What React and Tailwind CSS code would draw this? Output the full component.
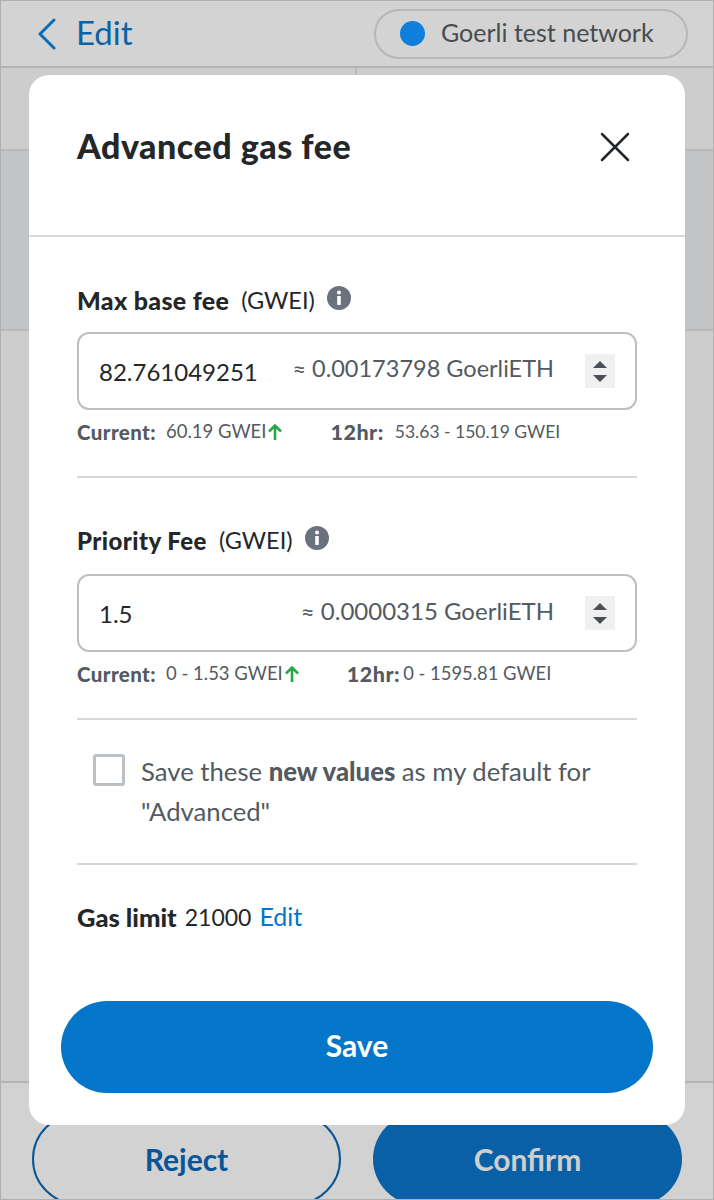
import { X } from 'lucide-react'

const font = { fontFamily: 'Lato, sans-serif' }

function Info() {
  return (
    <svg width="24" height="24" viewBox="0 0 24 24" className="ml-3 mt-[-7px]">
      <circle cx="12" cy="12" r="12" fill="#6a737d" />
      <circle cx="12" cy="6.5" r="2" fill="#fff" />
      <rect x="10.2" y="10" width="3.6" height="9" rx="0.5" fill="#fff" />
    </svg>
  )
}

function Spinner() {
  return (
    <div className="w-[30px] h-[34px] bg-[#f0f0f0] flex flex-col items-center justify-center gap-[7px]">
      <div className="w-0 h-0 border-x-[7px] border-x-transparent border-b-[7px] border-b-[#4a4f55]" />
      <div className="w-0 h-0 border-x-[7px] border-x-transparent border-t-[7px] border-t-[#4a4f55]" />
    </div>
  )
}

function UpArrow() {
  return (
    <svg width="18" height="18" viewBox="0 0 18 18" fill="none" stroke="#28a745" strokeWidth="2.6" className="shrink-0">
      <path d="M9 17V3M3 8.5L9 2.5L15 8.5" />
    </svg>
  )
}

function Field({ label, labelClass, value, approx, approxClass, current, range, rangeClass, inputGap }) {
  return (
    <div>
      <div className="flex items-center h-[28px] pt-[2px] text-[#24272a] text-[23.5px]">
        <b className={`font-black ${labelClass}`}>{label}</b>
        <span className="ml-3">(GWEI)</span>
        <Info />
      </div>
      <div className={`${inputGap} h-[78px] border-2 border-[#bbc0c5] rounded-[12px] flex items-center pl-[20px] pr-[20px]`}>
        <span className="text-[24px] text-[#24272a] mt-[2px]">{value}</span>
        <span className={`ml-auto text-[#535a61] mb-[4px] ${approxClass}`}>{approx}</span>
        <div className="ml-[31px]"><Spinner /></div>
      </div>
      <div className="mt-[9px] flex items-center h-[26px] text-[18.5px] text-[#535a61]">
        <b className="font-black text-[20.5px] tracking-[0.4px]">Current:</b>
        <span className="ml-[10px]">{current}</span>
        <UpArrow />
        <b className="font-black text-[21.5px] tracking-[0.5px] ml-[46px]">12hr:</b>
        <span className={rangeClass}>{range}</span>
      </div>
    </div>
  )
}

export default function App() {
  return (
    <div style={font} className="relative w-[714px] h-[1200px] overflow-hidden bg-[#cfcfcf] border border-[#b0b0b0]">
      <div className="h-[67px] border-b-2 border-[#b4b4b8] bg-[#d3d3d3] flex items-center pl-[36px] pr-[25px]">
        <svg width="20" height="32" viewBox="0 0 20 32" fill="none" stroke="#0a6cbb" strokeWidth="3" strokeLinecap="round" strokeLinejoin="round">
          <path d="M17 2L3 16L17 30" />
        </svg>
        <span className="ml-[19px] text-[33px] text-[#0a63a8] mb-[2px]">Edit</span>
        <div className="ml-auto w-[314px] h-[50px] rounded-full border-2 border-[#b5b7b9] flex items-center pl-[24px]">
          <div className="w-[25px] h-[25px] rounded-full bg-[#0f7fdb]" />
          <span className="ml-[16px] text-[25px] text-[#484c50] mb-[2px]">Goerli test network</span>
        </div>
      </div>
      <div className="h-[83px] border-b-2 border-[#b9b9bc] bg-[#cdcdcd] flex">
        <div className="w-[356px] border-r-2 border-[#b9b9bc]" />
      </div>
      <div className="h-[180px] border-b-2 border-[#b9b9bc] bg-[#c3c4c6]" />
      <div className="h-[752px] border-b-2 border-[#b4b4b4] bg-[#cdcdcd]" />
      <div className="flex gap-[32px] pl-[31px] pt-[2px] bg-[#d2d2d2] h-[130px]">
        <div className="w-[309px] h-[92px] mt-[28px] rounded-full border-2 border-[#0a5596] flex items-center justify-center text-[30px] font-bold text-[#0a5596]">Reject</div>
        <div className="w-[309px] h-[92px] mt-[28px] rounded-full bg-[#0a60a6] flex items-center justify-center text-[30px] font-bold text-[#cfcfcf]">Confirm</div>
      </div>

      <div className="absolute left-[28px] top-[74px] w-[656px] h-[1050px] bg-white rounded-[20px]">
        <div className="h-[162px] border-b-2 border-[#d6d9dc] px-[48px] pt-[51px] flex items-start justify-between">
          <h1 className="text-[34px] leading-[40px] tracking-[0.5px] font-black text-[#24272a]">Advanced gas fee</h1>
          <X className="w-[52px] h-[52px] mr-[-4px] mt-[-5px] text-[#24272a]" strokeWidth={1.15} />
        </div>
        <div className="px-[48px] pt-[49px]">
          <Field label="Max base fee" labelClass="text-[25px] tracking-[0.3px]" value="82.761049251" approx="≈ 0.00173798 GoerliETH" approxClass="text-[23.5px]" current="60.19 GWEI" range="53.63 - 150.19 GWEI" rangeClass="ml-[11px] text-[17.5px]" inputGap="mt-[18px]" />
          <div className="mt-[31px] border-t-2 border-[#d6d9dc]" />
          <div className="mt-[48px]">
            <Field label="Priority Fee" labelClass="text-[24px] tracking-[0.45px]" value="1.5" approx="≈ 0.0000315 GoerliETH" approxClass="text-[24px]" current="0 - 1.53 GWEI" range="0 - 1595.81 GWEI" rangeClass="ml-[3px] text-[18.4px]" inputGap="mt-[20px]" />
          </div>
          <div className="mt-[31px] border-t-2 border-[#d6d9dc]" />
          <div className="flex mt-[34px] pl-[16px]">
            <div className="w-[32px] h-[32px] border-[3px] border-[#bbc0c5] rounded-[3px] shrink-0" />
            <p className="ml-[16px] text-[25.7px] leading-[40px] text-[#535a61] mt-[-3px] w-[480px]">
              Save these <b className="font-black">new values</b> as my default for "Advanced"
            </p>
          </div>
          <div className="mt-[32px] border-t-2 border-[#d6d9dc]" />
          <div className="mt-[37px] flex items-center text-[23px] h-[30px] text-[#24272a]">
            <b className="font-black text-[25.5px]">Gas limit</b>
            <span className="ml-2">21000</span>
            <span className="ml-2 text-[25px] text-[#0376c9]">Edit</span>
          </div>
        </div>
        <div className="absolute left-[32px] right-[32px] bottom-[32px] h-[92px] rounded-full bg-[#0376c9] flex items-center justify-center text-white text-[30px] font-bold pb-[4px]">Save</div>
      </div>
    </div>
  )
}
